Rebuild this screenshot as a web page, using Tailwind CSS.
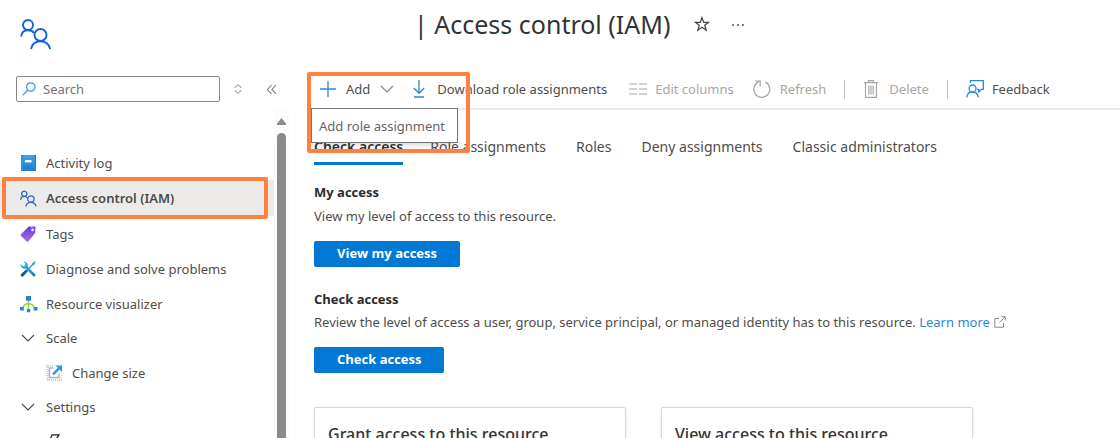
<!DOCTYPE html>
<html lang="en">
<head>
<meta charset="utf-8">
<meta name="viewport" content="width=device-width, initial-scale=1">
<title>Access control (IAM)</title>
<script src="https://cdn.jsdelivr.net/npm/@tailwindcss/browser@4"></script>
</head>
<body class="flex h-screen flex-col overflow-hidden bg-white font-['Noto_Sans','Open_Sans',sans-serif] text-[13px] leading-5 text-[#4f4d4a]">

<svg class="hidden" aria-hidden="true">
  <symbol id="people" viewBox="0 0 32 32">
    <g fill="none" stroke="currentColor" stroke-linecap="butt">
      <circle cx="8" cy="7" r="5"/>
      <path d="M1.200 18.500C1.600 14 4.400 12.200 8 12.200c2.600 0 4.800.8 6 2.800"/>
      <circle cx="20.500" cy="17" r="6"/>
      <path d="M11 31c1-5 4.800-7.800 9.500-7.800S29 26 30.200 31"/>
    </g>
  </symbol>
  <symbol id="chevron" viewBox="0 0 14 8">
    <path d="M1 1l6 6 6-6" fill="none" stroke="currentColor" stroke-width="1.200"/>
  </symbol>
</svg>

<header class="flex h-[70px] shrink-0 items-start">
  <div class="w-[414px] shrink-0 pt-[18px] pl-5">
    <svg class="size-8 text-[#0f62e0] [stroke-width:1.9]" aria-hidden="true"><use href="#people"/></svg>
  </div>
  <h1 class="pt-2 text-[25px] leading-8 whitespace-nowrap text-[#333]">| Access control (IAM)</h1>
  <button class="mt-4 ml-6 text-[#444]" aria-label="Add to favorites">
    <svg class="size-4" viewBox="0 0 16 16" fill="none" stroke="currentColor" stroke-width="1.200"><path d="M8 1.600l1.700 4.700h4.900l-3.900 3 1.500 4.900L8 11.300l-4.200 2.900 1.500-4.900-3.900-3h4.900z"/></svg>
  </button>
  <button class="mt-4 ml-5 text-[#555]" aria-label="More">
    <svg class="size-4" viewBox="0 0 16 16" fill="currentColor"><circle cx="3" cy="9" r="1"/><circle cx="8" cy="9" r="1"/><circle cx="13" cy="9" r="1"/></svg>
  </button>
</header>

<div class="flex min-h-0 flex-1">
  <aside class="flex w-[289px] shrink-0 flex-col">
    <div class="flex h-[38px] shrink-0 items-center pl-4">
      <label class="flex h-[26px] w-[204px] items-center gap-[7px] rounded-xs border border-[#8a8886] px-[5px]">
        <svg class="size-[14px] shrink-0 text-[#3a96dd]" viewBox="0 0 14 14" fill="none" stroke="currentColor" stroke-width="1.200" aria-hidden="true"><circle cx="8.800" cy="5" r="4.200"/><path d="M5.800 8L.6 13.300"/></svg>
        <input type="text" aria-label="Search" placeholder="Search" class="w-full min-w-0 bg-transparent outline-none placeholder:text-[#767472]">
      </label>
      <button class="ml-[14px] text-[#888]" aria-label="Expand or collapse all">
        <svg class="block h-[10px] w-2" viewBox="0 0 8 10" fill="none" stroke="currentColor"><path d="M1 4V3.400L4 .8l3 2.600V4M1 6v.6l3 2.600 3-2.600V6"/></svg>
      </button>
      <button class="ml-6 text-[#777]" aria-label="Hide menu">
        <svg class="block size-[11px]" viewBox="0 0 11 11" fill="none" stroke="currentColor" stroke-width="1.100"><path d="M5.500 1l-4 4.500 4 4.500M10 1L6 5.500l4 4.500"/></svg>
      </button>
    </div>
    <div class="flex min-h-0 flex-1">
      <nav class="min-w-0 flex-1 overflow-hidden pt-[37px]">
        <ul>
          <li><a href="#" class="flex h-[35px] items-center gap-[10px] pl-5">
            <svg class="size-4" viewBox="0 0 16 16" aria-hidden="true"><defs><linearGradient id="book" x1="0" y1="0" x2="0" y2="1"><stop stop-color="#42a5e8"/><stop offset="1" stop-color="#1580d2"/></linearGradient></defs><path d="M3 0h12v15H3z" fill="#8fc4ea"/><path d="M14.300 0H16v16H3v-1.300h11.300z" fill="#2476b8"/><path d="M1.200 0h13v14.800h-13z" fill="url(#book)"/><path d="M1.200 14.800h13V16h-13z" fill="#2683cb"/><path d="M1.200 0H3v16H1.200z" fill="#2a8fdb"/><path d="M5 5h6.500v2.400H5z" fill="#fff"/></svg>
            Activity log</a></li>
          <li class="relative"><a href="#" aria-current="page" class="flex h-9 items-center gap-[9px] bg-[#edebe9] pl-5 font-semibold text-[#4a4a4a]">
            <svg class="size-[17px] text-[#2566d8] [stroke-width:2.4]" aria-hidden="true"><use href="#people"/></svg>
            Access control (IAM)</a>
            <span class="pointer-events-none absolute -top-[3px] right-[6px] -bottom-[3px] left-[2px] rounded-xs border-4 border-[#ff8040]"></span>
          </li>
          <li><a href="#" class="flex h-[35px] items-center gap-[10px] pl-5">
            <svg class="size-4" viewBox="0 0 16 16" aria-hidden="true"><defs><linearGradient id="tag" x1="0" y1="0" x2="0" y2="1"><stop stop-color="#6a35d6"/><stop offset="1" stop-color="#a472dc"/></linearGradient></defs><path d="M1 8.300L8.300 1c.5-.5 1-.6 1.600-.6h4.300c.8 0 1.300.5 1.300 1.200l-.4 5c0 .6-.3 1-.7 1.500L8.300 15.500c-.5.5-1.100.5-1.600 0L1 9.900c-.5-.5-.5-1.100 0-1.600z" fill="url(#tag)"/><circle cx="12.400" cy="4" r="1.200" fill="#fff"/><path d="M10.500 1.500c2.500-.6 3.800.8 3 3.400" fill="none" stroke="#cbb0f2" stroke-width=".8"/></svg>
            Tags</a></li>
          <li><a href="#" class="flex h-[35px] items-center gap-[10px] pl-5">
            <svg class="size-4" viewBox="0 0 16 16" aria-hidden="true"><defs><linearGradient id="wrench" x1="0" y1="0" x2="1" y2="1"><stop stop-color="#35c4ec"/><stop offset="1" stop-color="#1277b5"/></linearGradient></defs><path d="M15.600.7l-.6-.4-2.600 1.600-.4 1.300-4.600 4.700 1 1 4.700-4.600 1.200-.4z" fill="#3b9fc9"/><path d="M6.400 8.300l1.700 1.700-4.700 5.200c-.6.600-1.500.6-2.100 0l-.2-.2c-.6-.6-.6-1.500 0-2.100z" fill="#125f93"/><path d="M3.300.5a4 4 0 0 1 4.200 5.300l7.700 7.500c.9 1-.9 2.900-1.900 1.900L5.800 7.600A4 4 0 0 1 .6 3l2.300 2.200 1.900-.5.5-1.900z" fill="url(#wrench)"/></svg>
            Diagnose and solve problems</a></li>
          <li><a href="#" class="flex h-[35px] items-center gap-[10px] pl-5">
            <svg class="size-4 overflow-visible" viewBox="0 0 16 16" aria-hidden="true"><path d="M8.500 4v9M2.500 12.500C3 9.500 5 8 8.500 7.500c3.500.5 5.500 2 6 5" fill="none" stroke="#86d633" stroke-width="1.300"/><g fill="#2583dc"><path d="M6 0h5v4.800H6zM0 11h3.800v3.500H0zM13.700 11h3.800v3.500h-3.800zM6.900 13h3.300v3.300H6.900z"/></g></svg>
            Resource visualizer</a></li>
          <li>
            <button aria-expanded="true" class="flex h-[34px] w-full items-center gap-[11px] pl-[21px]"><svg class="h-2 w-[14px]" aria-hidden="true"><use href="#chevron"/></svg>Scale</button>
            <ul><li><a href="#" class="flex h-[35px] items-center gap-[10px] pl-[46px]">
              <svg class="size-4" viewBox="0 0 16 16" aria-hidden="true"><path d="M1.700 0v15M1 14.700h15" fill="none" stroke="#b5da8c" stroke-width="2" stroke-dasharray="1 1"/><path d="M0 .8h8M15.200 15V8" fill="none" stroke="#c3e2a0" stroke-width="1.500" stroke-dasharray="1 1"/><path d="M7 3H3.500v9.500H13V9" fill="none" stroke="#b3b3b3" stroke-width="1.400"/><path d="M7 9.300l6-6" stroke="#2b97ec" stroke-width="2.400"/><path d="M9.500.4H16v6.500z" fill="#2b97ec"/></svg>
              Change size</a></li></ul>
          </li>
          <li>
            <button aria-expanded="true" class="flex h-[34px] w-full items-center gap-[11px] pl-[21px]"><svg class="h-2 w-[14px]" aria-hidden="true"><use href="#chevron"/></svg>Settings</button>
            <div class="flex h-[35px] items-center pl-[46px]"><svg class="size-4" viewBox="0 0 16 16" fill="none" stroke="#222" stroke-width="1.300" aria-hidden="true"><path d="M6 .8h7L9.500 6H13L4 15l2.500-6.500H3z"/></svg></div>
          </li>
        </ul>
      </nav>
      <div class="flex w-[15px] shrink-0 flex-col items-center bg-[#fcfcfc] pt-[10px]" aria-hidden="true">
        <svg class="h-[7px] w-[9px] shrink-0" viewBox="0 0 9 7"><path d="M4.500 0L9 5.500V7H0V5.500z" fill="#8a8a8a"/></svg>
        <span class="mt-2 w-[9px] flex-1 rounded-t-full bg-[#8a8a8a]"></span>
      </div>
    </div>
  </aside>

  <main class="min-w-0 flex-1 pl-[19px] whitespace-nowrap">
    <div class="relative flex h-10 items-center border-b-2 border-[#eaeaea] pl-3" role="toolbar" aria-label="Commands">
      <button class="flex items-center" aria-haspopup="menu" aria-expanded="true">
        <svg class="size-4" viewBox="0 0 16 16" fill="none" stroke="#2b88d8" stroke-width="1.300" aria-hidden="true"><path d="M8 0v16M0 8h16"/></svg>
        <span class="mx-[10px]">Add</span>
        <svg class="h-2 w-[14px] text-[#888]" aria-hidden="true"><use href="#chevron"/></svg>
      </button>
      <button class="ml-[19px] flex items-center gap-3">
        <svg class="h-[18px] w-3" viewBox="0 0 12 18" fill="none" stroke="#2b88d8" stroke-width="1.300" aria-hidden="true"><path d="M6 0v13.500M.8 8L6 13.300 11.200 8M1 17h10"/></svg>
        Download role assignments</button>
      <button disabled class="ml-[22px] flex items-center gap-2 text-[#a8a6a4]">
        <svg class="h-3 w-[18px]" viewBox="0 0 18 12" fill="none" stroke="currentColor" stroke-width="1.200" aria-hidden="true"><path d="M0 1h8M10 1h8M0 6h8M10 6h8M0 11h8M10 11h8"/></svg>
        Edit columns</button>
      <button disabled class="ml-[19px] flex items-center gap-2 text-[#a8a6a4]">
        <svg class="size-[19px]" viewBox="0 0 19 19" fill="none" stroke="currentColor" stroke-width="1.300" aria-hidden="true"><path d="M12.500 2.200a8 8 0 1 1-7-.2M2.200 1.200h5v5"/></svg>
        Refresh</button>
      <span class="ml-[18px] h-[19px] w-px bg-[#c8c6c4]"></span>
      <button disabled class="ml-[19px] flex items-center gap-[11px] text-[#a8a6a4]">
        <svg class="h-[18px] w-[14px]" viewBox="0 0 14 18" fill="none" stroke="currentColor" stroke-width="1.200" aria-hidden="true"><path d="M0 2.600h14M4.500 2.500V.7h5v1.800M1.500 2.600v14.800h11V2.600M4.800 5.500v9M7 5.500v9M9.200 5.500v9"/></svg>
        Delete</button>
      <span class="ml-[18px] h-[19px] w-px bg-[#c8c6c4]"></span>
      <button class="ml-[18px] flex items-center gap-2">
        <svg class="size-[18px]" viewBox="0 0 18 18" fill="none" stroke="#2b88d8" stroke-width="1.300" aria-hidden="true"><circle cx="6.500" cy="8.500" r="3.500"/><path d="M.7 17.500c.4-3.500 2.600-5.500 5.800-5.500s5.400 2 5.800 5.500M4.500 3V.7h12.800v8.600h-1.800L12.800 12V9.300h-1.500"/></svg>
        Feedback</button>

      <!-- Menu opened by Add -->
      <div role="menu" class="absolute top-[38px] left-[3px] z-10 flex h-[35px] w-[147px] items-center border border-[#777] bg-white pl-[7px] shadow-md"><button role="menuitem" class="text-[#666]">Add role assignment</button></div>
      <span class="pointer-events-none absolute top-[2px] -left-px z-20 h-[81px] w-[163px] rounded-xs border-4 border-[#ff8040]"></span>
    </div>

    <div class="pl-[6px]">
      <div class="flex h-[55px] items-end gap-[30px] text-sm" role="tablist">
        <button role="tab" aria-selected="true" class="-mr-[3px] border-b-3 border-[#0078d4] pb-[5px] font-semibold text-[#333]">Check access</button>
        <button role="tab" aria-selected="false" class="pb-2">Role assignments</button>
        <button role="tab" aria-selected="false" class="pb-2">Roles</button>
        <button role="tab" aria-selected="false" class="pb-2">Deny assignments</button>
        <button role="tab" aria-selected="false" class="pb-2">Classic administrators</button>
      </div>

      <section class="pt-[17px]">
        <h2 class="font-['Open_Sans',sans-serif] font-bold text-[#2b2b2b]">My access</h2>
        <p class="mt-1">View my level of access to this resource.</p>
        <button class="mt-[15px] block h-[26px] rounded-xs bg-[#0078d4] px-[23px] pb-[2px] font-['Open_Sans',sans-serif] font-bold text-white">View my access</button>
      </section>
      <section class="pt-[22px]">
        <h2 class="font-['Open_Sans',sans-serif] font-bold text-[#2b2b2b]">Check access</h2>
        <p class="mt-[3px]">Review the level of access a user, group, service principal, or managed identity has to this resource. <a href="#" class="text-[#2b88d8]">Learn more <svg class="ml-px inline size-3 align-[-1px] text-[#888]" viewBox="0 0 12 12" fill="none" stroke="currentColor" aria-hidden="true"><path d="M5 2.500H.8v8.700h8.700V7M7.500.7h3.800v3.800M11 1L5.500 6.500"/></svg></a></p>
        <button class="mt-[15px] block h-[26px] rounded-xs bg-[#0078d4] px-[23px] pb-[2px] font-['Open_Sans',sans-serif] font-bold text-white">Check access</button>
      </section>
      <section class="grid grid-cols-[312px_312px] gap-[35px] pt-[34px] text-base text-[#333]">
        <div class="rounded-xs border border-[#d8d8d8] px-[13px] py-[14px] shadow-sm"><h3 class="font-medium leading-6">Grant access to this resource</h3></div>
        <div class="rounded-xs border border-[#d8d8d8] px-[13px] py-[14px] shadow-sm"><h3 class="font-medium leading-6">View access to this resource</h3></div>
      </section>
    </div>
  </main>
</div>
</body>
</html>
